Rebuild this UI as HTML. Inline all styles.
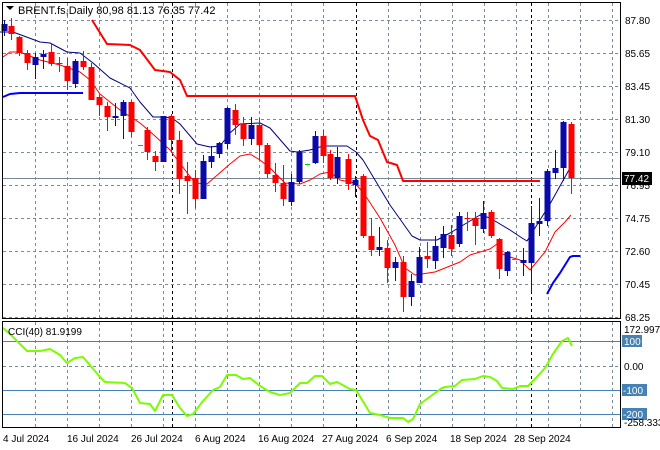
<!DOCTYPE html>
<html><head><meta charset="utf-8"><style>
html,body{margin:0;padding:0;background:#fff;width:660px;height:450px;overflow:hidden}
svg{display:block;font-family:"Liberation Sans",sans-serif;font-size:10px}
</style></head><body>
<svg id="s" width="660" height="450" xmlns="http://www.w3.org/2000/svg">
<g id="grid" stroke="#7b8a99" stroke-width="1" stroke-dasharray="3,3" fill="none"></g>
<g id="c"></g>
<rect x="2.5" y="2.5" width="618" height="316" fill="none" stroke="#000"/>
<rect x="2.5" y="321.5" width="618" height="106" fill="none" stroke="#000"/>
<polygon points="6,6 14,6 10,10" fill="#000"/>
<text x="18" y="14" font-size="11">BRENT.fs,Daily  80,98 81.13 76.35 77.42</text>
<text x="8" y="335" font-size="10">CCI(40) 81.9199</text>
<g font-size="10" fill="#000">
<text x="625" y="24">87.80</text><text x="625" y="57">85.65</text><text x="625" y="90">83.45</text>
<text x="625" y="123">81.30</text><text x="625" y="156">79.10</text><text x="625" y="189">76.95</text>
<text x="625" y="222">74.75</text><text x="625" y="255">72.60</text><text x="625" y="288">70.45</text>
<text x="625" y="321">68.25</text>
<rect x="622" y="172" width="30" height="13" fill="#000"/><text x="624" y="182" fill="#fff">77.42</text>
<text x="624" y="333">172.9974</text>
<rect x="622" y="335" width="20" height="12" fill="#4682b4"/><text x="624" y="345" fill="#fff">100</text>
<text x="624" y="370">0.00</text>
<rect x="622" y="384" width="25" height="12" fill="#4682b4"/><text x="623" y="394" fill="#fff">-100</text>
<rect x="622" y="408" width="25" height="12" fill="#4682b4"/><text x="623" y="418" fill="#fff">-200</text>
<text x="624" y="426">-258.333</text>
<text x="3" y="442">4 Jul 2024</text><text x="67" y="442">16 Jul 2024</text><text x="131" y="442">26 Jul 2024</text>
<text x="195" y="442">6 Aug 2024</text><text x="258" y="442">16 Aug 2024</text><text x="322" y="442">27 Aug 2024</text>
<text x="386" y="442">6 Sep 2024</text><text x="450" y="442">18 Sep 2024</text><text x="514" y="442">28 Sep 2024</text>
</g>
</svg>
<script>
var NS="http://www.w3.org/2000/svg",g=document.getElementById('grid'),c=document.getElementById('c');
function el(p,t,a){var e=document.createElementNS(NS,t);for(var k in a)e.setAttribute(k,a[k]);p.appendChild(e);return e;}
[20,53,86,119,152,185,218,251,284,317].forEach(function(y){el(g,'line',{x1:3,x2:620,y1:y+.5,y2:y+.5});});
[366].forEach(function(y){el(g,'line',{x1:3,x2:620,y1:y+.5,y2:y+.5});});
for(var x=35;x<620;x+=32.05){var xx=Math.round(x)+.5;var blk=(Math.abs(xx-171.5)<3||Math.abs(xx-355.5)<3||Math.abs(xx-531.5)<3);
el(g,'line',{x1:xx,x2:xx,y1:3,y2:318,stroke:blk?'#000':'#7b8a99'});el(g,'line',{x1:xx,x2:xx,y1:322,y2:427,stroke:blk?'#000':'#7b8a99'});}
el(c,'line',{x1:172.5,x2:172.5,y1:3,y2:318,stroke:'#000','stroke-dasharray':'3,3'});
el(c,'line',{x1:356.5,x2:356.5,y1:3,y2:318,stroke:'#000','stroke-dasharray':'3,3'});
el(c,'line',{x1:531.5,x2:531.5,y1:3,y2:318,stroke:'#000','stroke-dasharray':'3,3'});
el(c,'line',{x1:172.5,x2:172.5,y1:322,y2:427,stroke:'#000','stroke-dasharray':'3,3'});
el(c,'line',{x1:356.5,x2:356.5,y1:322,y2:427,stroke:'#000','stroke-dasharray':'3,3'});
el(c,'line',{x1:531.5,x2:531.5,y1:322,y2:427,stroke:'#000','stroke-dasharray':'3,3'});
el(c,'line',{x1:3,x2:620,y1:178.5,y2:178.5,stroke:'#778899'});
[341,390,414].forEach(function(y){el(c,'line',{x1:3,x2:620,y1:y+.5,y2:y+.5,stroke:'#4682b4'});});
function pl(pts,col,w){el(c,'polyline',{points:pts,fill:'none',stroke:col,'stroke-width':w,'stroke-linejoin':'round'});}
pl("0,32 13,32 40,42 50,43 67,52 80,53 93,63 110,78 130,88 140,102 153,117 163,117 172,118 180,124 197,144 210,147 220,146 230,133 240,124 260,123 270,128 290,151 297,152 310,150 323,146 347,146 356,152 363,160 390,205 412,236 420,240 437,240 450,233 480,215 490,218 510,230 522,238 527,241 530,236 550,204 565,177 570,168","#000080",1);
pl("3,57 10,52 20,52 40,60 60,65 80,72 90,80 100,94 120,110 140,123 155,136 170,150 185,170 195,183 207,184 230,164 240,156 250,154 260,160 270,168 285,183 300,184 310,180 320,174 330,172 340,180 355,183 365,195 380,218 395,245 405,268 415,275 435,272 460,262 470,255 490,249 497,244 500,253 510,257 520,260 530,270 545,252 555,232 565,222 571,215","#ff0000",1);
pl("92,20 107,44 130,45 140,50 155,70 170,72 180,80 187,96 355,96 363,120 370,136 378,140 387,162 397,165 403,181 540,181","#ff0000",2);
pl("3,97 10,94 20,93 83,93","#0000ff",2);
pl("547,294 553,283 560,273 570,257 573,256 580,256","#0000ff",2);
pl("3,328 10,334 27,351 40,351 50,349 60,355 67,363 75,358 83,357 100,377 105,382 125,383 132,388 140,403 150,404 155,411 163,395 172,395 180,408 187,416 193,414 203,401 213,390 220,387 227,375 236,375 243,379 250,378 260,386 270,392 280,395 290,393 300,383 307,383 315,376 322,376 330,384 337,382 350,389 356,390 370,413 380,415 390,418 403,418 408,422 413,419 420,404 435,393 442,388 445,387 455,386 462,380 475,379 483,376 490,377 497,381 502,388 513,389 520,386 528,386 535,379 545,368 553,354 562,341 568,338 572,346","#7cfc00",2);
[[138,145],[305,164],[512,259]].forEach(function(p){el(c,'line',{x1:p[0],x2:p[0]+5,y1:p[1]+.5,y2:p[1]+.5,stroke:'#00c000'});});
var C=[[4,'b',24,31,20,36],[11,'r',26,34,18,40],[19,'r',37,53,36,56],[27,'r',53,63,50,70],[35,'b',57,65,53,79],[43,'b',54,57,50,69],[51,'r',52,64,43,66],[59,'r',63,64,57,72],[67,'r',66,81,58,90],[75,'b',61,84,59,88],[83,'r',61,67,51,70],[91,'r',67,100,63,100],[99,'r',97,105,95,116],[107,'r',106,117,102,131],[115,'b',116,118,103,126],[123,'b',102,116,100,139],[131,'r',102,132,100,137],[147,'r',130,152,127,160],[155,'r',156,162,151,171],[163,'b',116,162,116,162],[171,'r',116,140,114,152],[179,'r',140,179,131,194],[187,'r',176,181,162,214],[195,'r',178,199,170,208],[203,'b',161,199,155,199],[211,'b',156,162,146,168],[219,'b',143,154,142,158],[227,'b',108,144,107,149],[235,'r',110,125,104,135],[243,'r',124,139,117,146],[251,'b',125,139,117,145],[259,'r',125,145,118,160],[267,'r',145,174,143,178],[275,'r',175,183,163,192],[283,'r',183,199,165,206],[291,'b',182,202,174,206],[299,'b',152,182,150,184],[315,'b',136,163,131,164],[323,'r',136,156,130,163],[330,'r',154,178,150,180],[337,'b',157,178,147,184],[348,'r',159,184,154,190],[355,'b',180,185,176,197],[363,'r',176,236,174,238],[371,'r',236,250,218,256],[379,'b',247,250,227,256],[387,'r',248,268,240,283],[395,'b',262,268,257,281],[403,'r',262,297,256,312],[411,'b',281,297,274,306],[419,'b',257,283,247,283],[427,'r',256,259,242,268],[435,'b',246,261,236,269],[443,'b',234,248,226,258],[451,'r',235,249,225,256],[459,'b',216,244,212,247],[467,'r',218,219,212,231],[475,'r',218,226,212,245],[483,'b',213,229,201,233],[491,'r',212,236,210,238],[499,'r',239,269,238,279],[507,'b',252,271,251,276],[523,'b',260,263,248,276],[531,'b',223,263,206,292],[539,'b',221,224,198,236],[547,'b',171,221,169,226],[555,'b',168,173,150,179],[563,'b',122,168,121,181],[571,'r',124,178,122,194]];
C.forEach(function(k){var col=k[1]=='b'?'#0a0aa8':'#ff0000';
el(c,'line',{x1:k[0]+.5,x2:k[0]+.5,y1:k[4],y2:k[5],stroke:col});
el(c,'rect',{x:k[0]-2.5,y:k[2],width:6,height:Math.max(1,k[3]-k[2]),fill:col});});
</script>
</body></html>
